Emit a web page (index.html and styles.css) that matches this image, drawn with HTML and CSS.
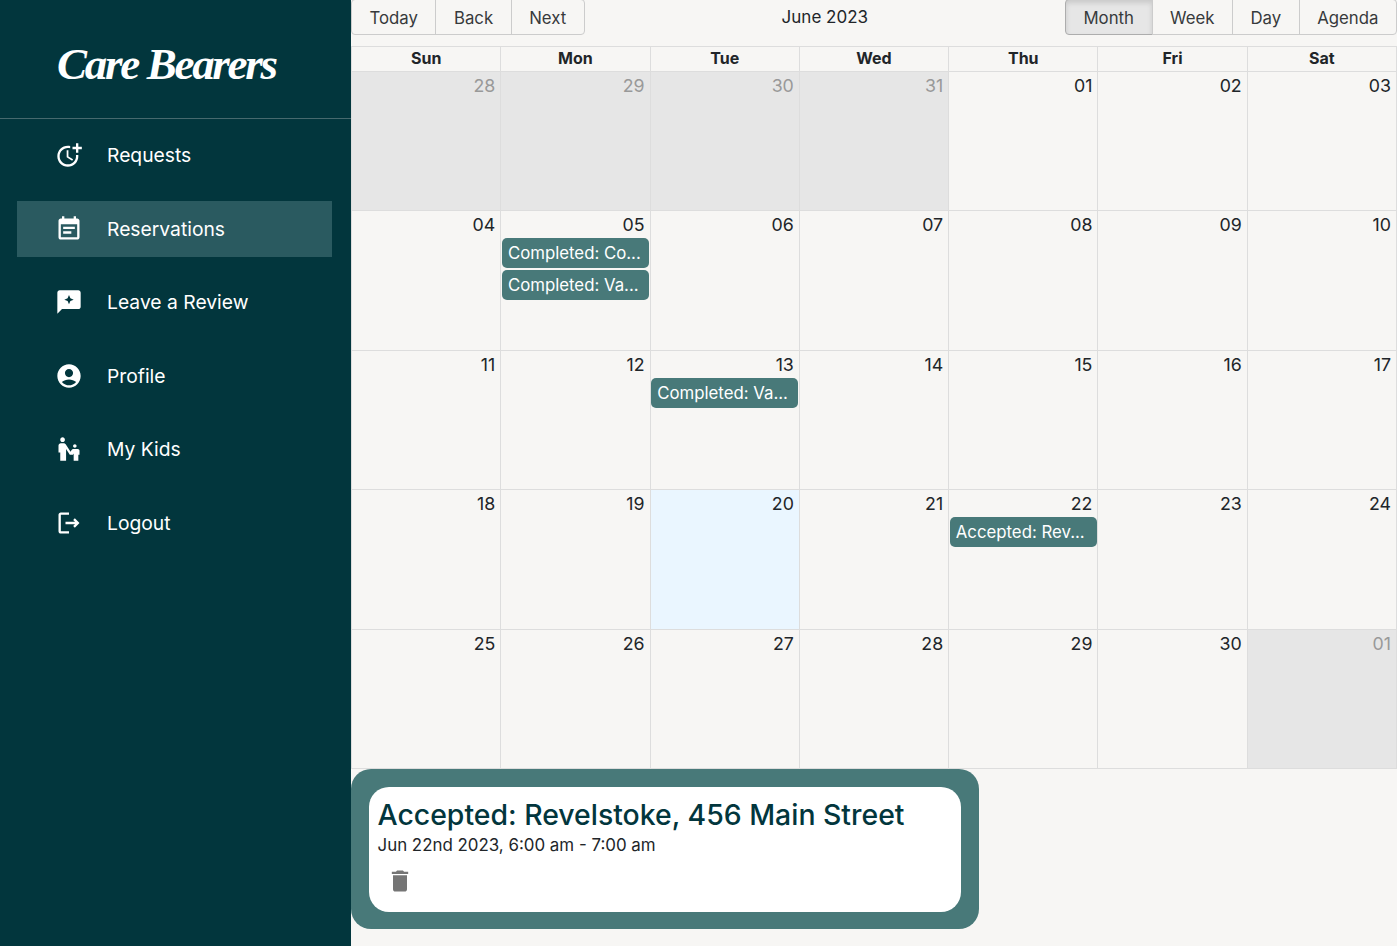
FILE: index.html
```html
<!DOCTYPE html>
<html lang="en">
<head>
    <meta charset="UTF-8">
    <meta name="viewport" content="width=device-width, initial-scale=1.0">
    <title>Care Bearers</title>
    <link rel="stylesheet" href="styles.css">
</head>
<body>
    <div class="layout">
        <aside class="sidebar">
            <div class="logo">Care Bearers</div>
            <nav class="nav">
                <a class="nav-item" href="#">
                    <svg class="nav-icon" viewBox="0 0 24 24"><path d="M10 8v6l4.7 2.9.8-1.2-4-2.4V8z"/><path d="M17.92 12c.05.33.08.66.08 1 0 3.9-3.1 7-7 7s-7-3.1-7-7 3.1-7 7-7c.7 0 1.37.1 2 .29V4.23C12.36 4.08 11.69 4 11 4c-5 0-9 4-9 9s4 9 9 9 9-4 9-9c0-.34-.02-.67-.06-1h-2.02z"/><path d="M20 5V2h-2v3h-3v2h3v3h2V7h3V5z"/></svg>
                    <span>Requests</span>
                </a>
                <a class="nav-item active" href="#">
                    <svg class="nav-icon" viewBox="0 0 24 24"><path d="M17 10H7v2h10v-2zm2-7h-1V1h-2v2H8V1H6v2H5c-1.11 0-1.99.9-1.99 2L3 19c0 1.1.89 2 2 2h14c1.1 0 2-.9 2-2V5c0-1.1-.9-2-2-2zm0 16H5V8h14v11zm-5-5H7v2h7v-2z"/></svg>
                    <span>Reservations</span>
                </a>
                <a class="nav-item" href="#">
                    <svg class="nav-icon" viewBox="0 0 24 24"><path fill-rule="evenodd" d="M20 2H4c-1.1 0-1.99.9-1.99 2L2 22l4-4h14c1.1 0 2-.9 2-2V4c0-1.1-.9-2-2-2zM12 6l1.2 2.8L16 10l-2.8 1.2L12 14l-1.2-2.8L8 10l2.8-1.2z"/></svg>
                    <span>Leave a Review</span>
                </a>
                <a class="nav-item" href="#">
                    <svg class="nav-icon" viewBox="0 0 24 24"><path d="M12 2C6.48 2 2 6.48 2 12s4.48 10 10 10 10-4.48 10-10S17.52 2 12 2zm0 4c1.93 0 3.5 1.57 3.5 3.5S13.93 13 12 13s-3.5-1.57-3.5-3.5S10.07 6 12 6zm0 14c-2.03 0-4.43-.82-6.14-2.88C7.55 15.8 9.68 15 12 15s4.45.8 6.14 2.12C16.43 19.18 14.03 20 12 20z"/></svg>
                    <span>Profile</span>
                </a>
                <a class="nav-item" href="#">
                    <svg class="nav-icon" viewBox="0 0 24 24"><path d="M6.5 2c1.1 0 2 .9 2 2s-.9 2-2 2-2-.9-2-2 .9-2 2-2zm9 7.5c0 .83.67 1.5 1.5 1.5s1.5-.67 1.5-1.5S17.83 8 17 8s-1.5.67-1.5 1.5zM18.5 12h-2.84c-.58.01-1.14.32-1.45.83l-.88 1.48-4.02-6.14C8.93 7.55 8.28 7.01 7.5 7H5C3.9 7 3 7.9 3 9v6h1.5v7h5V11.9l3.18 5.1h2.66l.66-1.11V22h4v-5h1v-3.5c0-.82-.67-1.5-1.5-1.5z"/></svg>
                    <span>My Kids</span>
                </a>
                <a class="nav-item" href="#">
                    <svg class="nav-icon" viewBox="0 0 24 24"><path d="M17 8l-1.41 1.41L17.17 11H9v2h8.17l-1.58 1.58L17 16l4-4-4-4zM5 5h7V3H5c-1.1 0-2 .9-2 2v14c0 1.1.9 2 2 2h7v-2H5V5z"/></svg>
                    <span>Logout</span>
                </a>
            </nav>
        </aside>

        <main class="main">
            <div class="toolbar">
                <div class="btn-group">
                    <button class="btn">Today</button>
                    <button class="btn">Back</button>
                    <button class="btn">Next</button>
                </div>
                <div class="toolbar-label">June 2023</div>
                <div class="btn-group">
                    <button class="btn btn-active">Month</button>
                    <button class="btn">Week</button>
                    <button class="btn">Day</button>
                    <button class="btn">Agenda</button>
                </div>
            </div>

            <div class="month">
                <div class="week-head">Sun</div>
                <div class="week-head">Mon</div>
                <div class="week-head">Tue</div>
                <div class="week-head">Wed</div>
                <div class="week-head">Thu</div>
                <div class="week-head">Fri</div>
                <div class="week-head">Sat</div>

                <div class="day off"><span class="date">28</span></div>
                <div class="day off"><span class="date">29</span></div>
                <div class="day off"><span class="date">30</span></div>
                <div class="day off"><span class="date">31</span></div>
                <div class="day"><span class="date">01</span></div>
                <div class="day"><span class="date">02</span></div>
                <div class="day"><span class="date">03</span></div>

                <div class="day"><span class="date">04</span></div>
                <div class="day">
                    <span class="date">05</span>
                    <div class="event">Completed: Co...</div>
                    <div class="event">Completed: Va...</div>
                </div>
                <div class="day"><span class="date">06</span></div>
                <div class="day"><span class="date">07</span></div>
                <div class="day"><span class="date">08</span></div>
                <div class="day"><span class="date">09</span></div>
                <div class="day"><span class="date">10</span></div>

                <div class="day"><span class="date">11</span></div>
                <div class="day"><span class="date">12</span></div>
                <div class="day">
                    <span class="date">13</span>
                    <div class="event">Completed: Va...</div>
                </div>
                <div class="day"><span class="date">14</span></div>
                <div class="day"><span class="date">15</span></div>
                <div class="day"><span class="date">16</span></div>
                <div class="day"><span class="date">17</span></div>

                <div class="day"><span class="date">18</span></div>
                <div class="day"><span class="date">19</span></div>
                <div class="day today"><span class="date">20</span></div>
                <div class="day"><span class="date">21</span></div>
                <div class="day">
                    <span class="date">22</span>
                    <div class="event">Accepted: Rev...</div>
                </div>
                <div class="day"><span class="date">23</span></div>
                <div class="day"><span class="date">24</span></div>

                <div class="day"><span class="date">25</span></div>
                <div class="day"><span class="date">26</span></div>
                <div class="day"><span class="date">27</span></div>
                <div class="day"><span class="date">28</span></div>
                <div class="day"><span class="date">29</span></div>
                <div class="day"><span class="date">30</span></div>
                <div class="day off"><span class="date">01</span></div>
            </div>

            <div class="detail">
                <div class="detail-card">
                    <h2 class="detail-title">Accepted: Revelstoke, 456 Main Street</h2>
                    <div class="detail-time">Jun 22nd 2023, 6:00 am - 7:00 am</div>
                    <button class="icon-btn" aria-label="Delete">
                        <svg viewBox="0 0 24 24"><path d="M6 19c0 1.1.9 2 2 2h8c1.1 0 2-.9 2-2V7H6v12zM19 4h-3.5l-1-1h-5l-1 1H5v2h14V4z"/></svg>
                    </button>
                </div>
            </div>
        </main>
    </div>
</body>
</html>
```

FILE: styles.css
```css
* {
    box-sizing: border-box;
}
html,
body {
    height: 100%;
    margin: 0;
    overflow: hidden;
}
body {
    font-family: Inter, "Liberation Sans", sans-serif;
    background-color: #f7f6f4;
    color: #212529;
}
.layout {
    display: flex;
    height: 946px;
}

/* sidebar */
.sidebar {
    width: 351px;
    flex-shrink: 0;
    background-color: #02363d;
}
.logo {
    height: 119px;
    padding: 36px 0 0 57px;
    border-bottom: 1px solid #47696e;
    font-family: "Liberation Serif", serif;
    font-style: italic;
    font-weight: 700;
    font-size: 45px;
    line-height: 56px;
    letter-spacing: -2.3px;
    color: #fff;
}
.nav {
    display: flex;
    flex-direction: column;
    gap: 17.6px;
    padding: 8px 19px 0 17px;
}
.nav-item {
    display: flex;
    align-items: center;
    gap: 24px;
    height: 56px;
    padding-left: 38px;
    font-size: 19.3px;
    color: #fff;
    text-decoration: none;
}
.nav-item.active {
    background-color: #2a5a60;
}
.nav-icon {
    width: 28px;
    height: 28px;
    flex-shrink: 0;
    fill: #fff;
}

/* toolbar */
.main {
    flex: 1;
    min-width: 0;
}
.toolbar {
    display: flex;
    align-items: flex-start;
    height: 35px;
    margin-bottom: 11px;
}
.toolbar-label {
    flex: 1;
    text-align: center;
    font-size: 17px;
    line-height: 34px;
}
.btn-group {
    display: flex;
    margin-top: -1px;
}
.btn {
    height: 36px;
    padding: 1px 17.5px 0;
    margin-left: -1px;
    border: 1px solid #ccc;
    background: none;
    font-family: inherit;
    font-size: 16.8px;
    color: #373a3c;
}
.btn-group .btn:first-child {
    margin-left: 0;
    border-radius: 4px 0 0 4px;
}
.btn-group .btn:last-child {
    border-radius: 0 4px 4px 0;
}
.btn-active {
    background-color: #e6e6e6;
    border-color: #adadad;
    box-shadow: inset 0 3px 5px rgba(0, 0, 0, 0.125);
}

/* month grid */
.month {
    display: grid;
    grid-template-columns: repeat(7, 1fr);
    grid-template-rows: 25px repeat(5, 1fr);
    height: 723px;
    border-top: 1px solid #ddd;
    border-right: 1px solid #ddd;
}
.week-head {
    border-left: 1px solid #ddd;
    border-bottom: 1px solid #ddd;
    text-align: center;
    font-size: 16px;
    font-weight: 700;
    line-height: 22px;
}
.day {
    display: flex;
    flex-direction: column;
    min-width: 0;
    border-left: 1px solid #ddd;
    border-bottom: 1px solid #ddd;
}
.day.off {
    background-color: #e6e6e6;
}
.day.off .date {
    color: #999;
}
.day.today {
    background-color: #eaf6ff;
}
.date {
    padding: 2px 5px 0 0;
    height: 27px;
    text-align: right;
    font-size: 17.8px;
    line-height: 24px;
}
.event {
    height: 30px;
    margin: 0 0.6px 2px;
    padding: 0 6px;
    white-space: nowrap;
    border-radius: 5px;
    background-color: #487979;
    color: #fff;
    font-size: 16.8px;
    line-height: 30px;
}

/* selected reservation */
.detail {
    width: 628px;
    height: 160px;
    padding: 18px;
    border-radius: 20px;
    background-color: #487979;
}
.detail-card {
    height: 125px;
    padding: 9px 8.5px;
    border-radius: 20px;
    background-color: #fff;
}
.detail-title {
    margin: 0;
    font-size: 28.4px;
    font-weight: 500;
    line-height: 38px;
    color: #02363d;
}
.detail-time {
    font-size: 16.9px;
    line-height: 23px;
}
.icon-btn {
    display: block;
    padding: 0;
    margin: 10px 0 0 8px;
    width: 28px;
    height: 28px;
    border: none;
    background: none;
}
.icon-btn svg {
    display: block;
    width: 28px;
    height: 28px;
    fill: #757575;
}
```
